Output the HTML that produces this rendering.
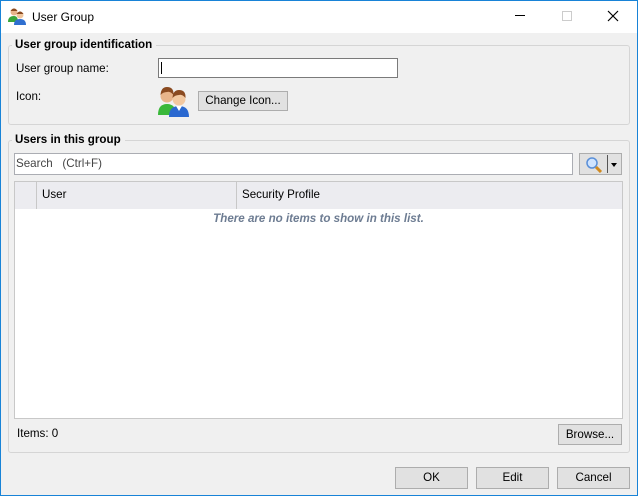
<!DOCTYPE html>
<html><head><meta charset="utf-8"><style>
*{box-sizing:border-box;margin:0;padding:0}
body{width:638px;height:496px;background:#f0f0f0;font-family:"Liberation Sans",sans-serif;font-size:11.6px;color:#000;position:relative;overflow:hidden}
.frame{position:absolute;left:0;top:0;width:638px;height:496px;border:1px solid #1883d7;z-index:5}
.title{position:absolute;left:0;top:0;width:638px;height:33px;background:#fff}
.abs{position:absolute}
.grp{position:absolute;border:1px solid #d5d5d5;border-radius:3px}
.leg{position:absolute;background:#f0f0f0;font-weight:bold;padding:0 4px 0 3px;font-size:11.6px}
.btn{position:absolute;background:#e1e1e1;border:1px solid #adadad;text-align:center;font-size:11.6px}
.inp{position:absolute;background:#fff;border:1px solid #7a7a7a}
</style></head><body><div class="frame"></div>
<div class="title">
<svg class="abs" style="left:8px;top:7px" width="18" height="18" viewBox="0 0 18 18"><circle cx="6" cy="5" r="3.5" fill="#e8b48a"/><path d="M2.5 4 Q6 -1 9.5 4" fill="#8a4a20"/><path d="M0 15 Q0 9 6 9 Q10 9 10 15Z" fill="#3aa53a"/><circle cx="12" cy="8" r="3.5" fill="#f0c59c"/><path d="M8.5 7 Q12 2 15.5 7" fill="#8a4a20"/><path d="M6 18 Q6 12 12 12 Q18 12 18 18Z" fill="#2f6fd0"/></svg>
<div class="abs" style="left:32px;top:10px;font-size:12px">User Group</div>
<div class="abs" style="left:515px;top:15px;width:10px;height:1px;background:#000"></div>
<div class="abs" style="left:562px;top:11px;width:10px;height:10px;border:1px solid #ccc"></div>
<svg class="abs" style="left:607px;top:10px" width="12" height="12"><path d="M1 1L11 11M11 1L1 11" stroke="#000" stroke-width="1.2"/></svg>
</div>
<div class="grp" style="left:8px;top:45px;width:622px;height:80px"></div>
<div class="leg" style="left:12px;top:38px">User group identification</div>
<div class="abs" style="left:16px;top:62px">User group name:</div>
<div class="inp" style="left:158px;top:58px;width:240px;height:20px"><div class="abs" style="left:2px;top:3px;width:1px;height:12px;background:#000"></div></div>
<div class="abs" style="left:16px;top:90px">Icon:</div>
<svg class="abs" style="left:157px;top:85px" width="34" height="32" viewBox="0 0 34 32"><path d="M1 30 Q1 19 10 19 Q19 19 19 30Z" fill="#3ab83a"/><circle cx="10" cy="11" r="6.5" fill="#e8b48a"/><path d="M3.5 10 Q4 2 10 2 Q17 2 16.5 10 Q13 6 10 7 Q6 7 3.5 10Z" fill="#8a4a20"/><path d="M12 32 Q12 21 22 21 Q32 21 32 32Z" fill="#2a68d0"/><path d="M19 21 L22 26 L25 21Z" fill="#fff"/><circle cx="22" cy="14" r="6.5" fill="#f2c8a0"/><path d="M15.5 13 Q16 5 22 5 Q29 5 28.5 13 Q25 9 22 10 Q18 10 15.5 13Z" fill="#8a4a20"/></svg>
<div class="btn" style="left:198px;top:91px;width:90px;height:20px;line-height:18px">Change Icon...</div>
<div class="grp" style="left:8px;top:140px;width:622px;height:313px"></div>
<div class="leg" style="left:12px;top:133px">Users in this group</div>
<div class="inp" style="left:14px;top:153px;width:559px;height:22px;border-color:#abadb3"><div class="abs" style="left:1px;top:3px;color:#444">Search &nbsp;&nbsp;(Ctrl+F)</div></div>
<div class="btn" style="left:579px;top:153px;width:43px;height:22px"></div>
<svg class="abs" style="left:585px;top:156px" width="18" height="17"><circle cx="7" cy="7" r="5" fill="#cfe4ff" stroke="#5a8fd8" stroke-width="1.5"/><path d="M11 11L16 16" stroke="#d08a20" stroke-width="3"/></svg>
<div class="abs" style="left:607px;top:155px;width:1px;height:18px;background:#555"></div>
<div class="abs" style="left:611px;top:163px;border-left:3.5px solid transparent;border-right:3.5px solid transparent;border-top:4px solid #000"></div>
<div class="abs" style="left:14px;top:181px;width:609px;height:238px;background:#fff;border:1px solid #c8c8c8"></div>
<div class="abs" style="left:15px;top:182px;width:607px;height:27px;background:#ececf0"></div>
<div class="abs" style="left:36px;top:182px;width:1px;height:27px;background:#c8c8c8"></div>
<div class="abs" style="left:236px;top:182px;width:1px;height:27px;background:#c8c8c8"></div>
<div class="abs" style="left:42px;top:188px">User</div>
<div class="abs" style="left:242px;top:188px">Security Profile</div>
<div class="abs" style="left:15px;top:212px;width:607px;text-align:center;font-style:italic;font-weight:bold;color:#6d7c92">There are no items to show in this list.</div>
<div class="abs" style="left:17px;top:427px">Items: 0</div>
<div class="btn" style="left:558px;top:424px;width:64px;height:21px;line-height:19px">Browse...</div>
<div class="btn" style="left:395px;top:467px;width:73px;height:22px;line-height:20px">OK</div>
<div class="btn" style="left:476px;top:467px;width:73px;height:22px;line-height:20px">Edit</div>
<div class="btn" style="left:557px;top:467px;width:73px;height:22px;line-height:20px">Cancel</div>
</body></html>
